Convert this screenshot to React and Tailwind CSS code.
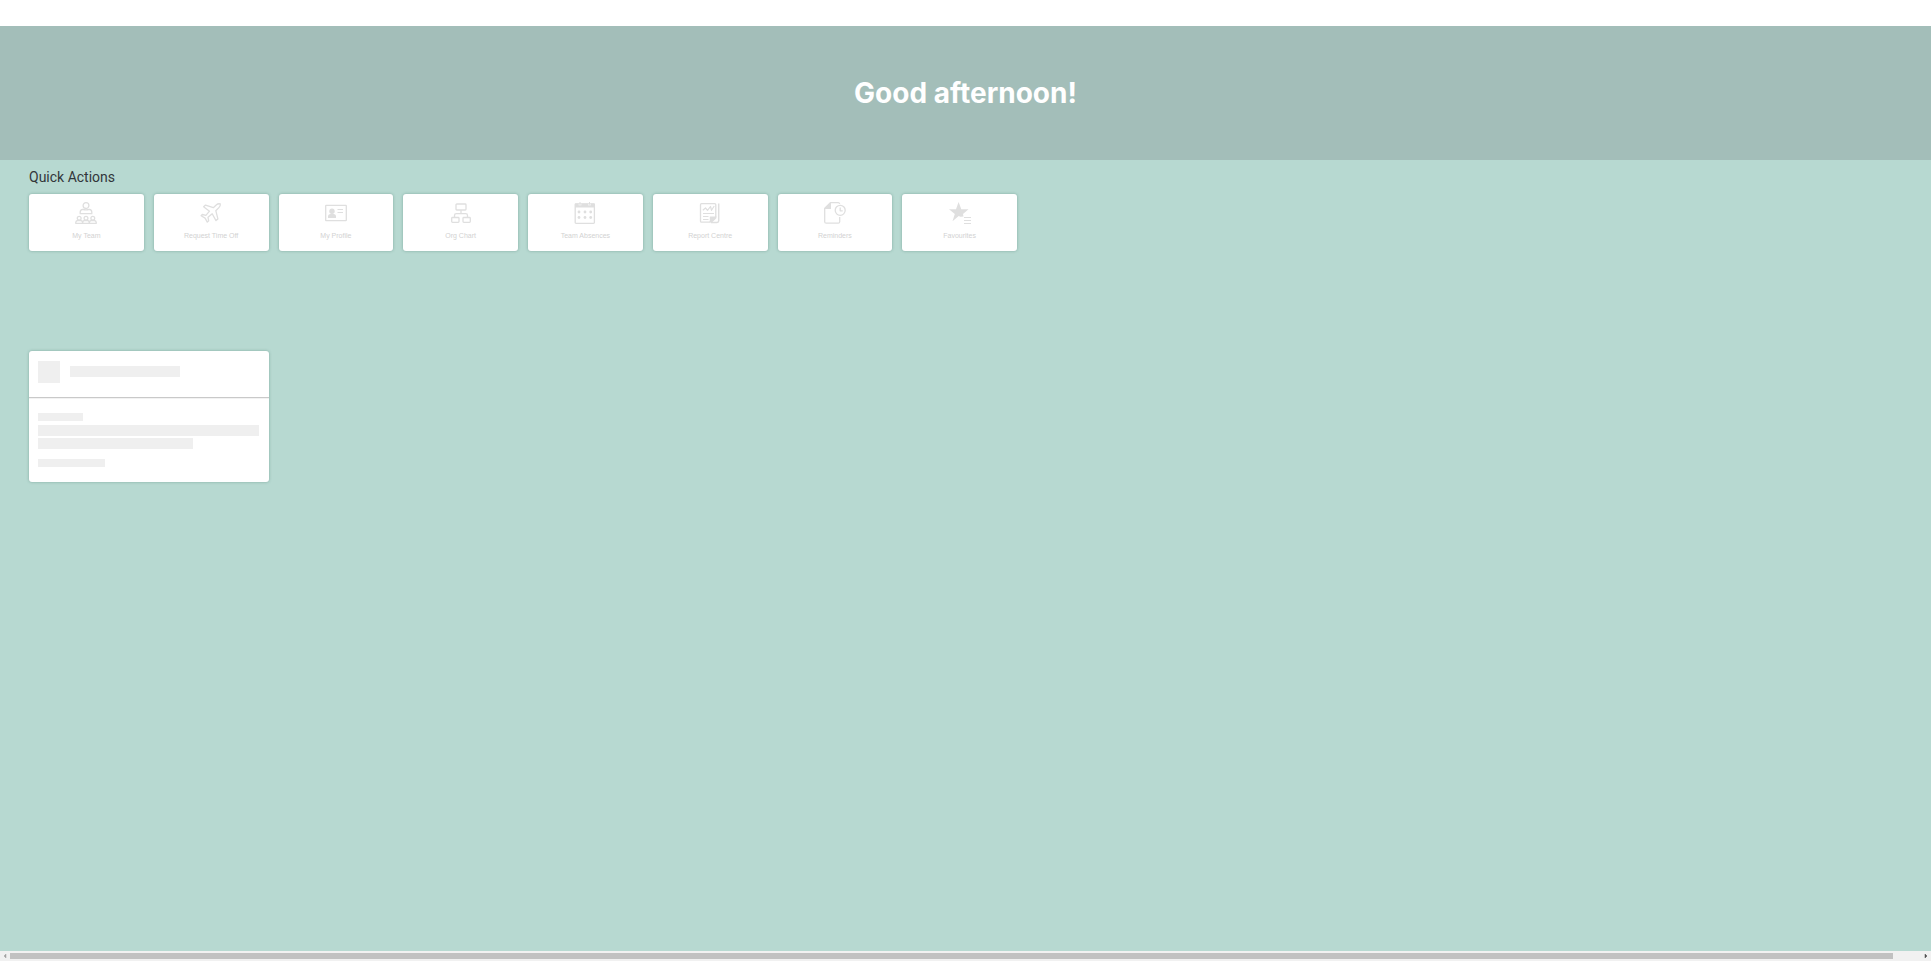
import React from "react";

function Icon({ children }) {
  return (
    <svg
      viewBox="0 0 22 22"
      className="size-[22px]"
      fill="none"
      stroke="currentColor"
      strokeWidth="1.3"
      strokeLinejoin="round"
      aria-hidden="true"
    >
      {children}
    </svg>
  );
}

function Person({ x }) {
  return (
    <>
      <circle cx={x} cy="16.200" r="1.900" />
      <path d={`M${x - 3.5} 21.3v-.6q0-1.800 1.800-2.200h3.400q1.800 .4 1.800 2.200v.6z`} />
    </>
  );
}

const TeamIcon = () => (
  <Icon>
    <circle cx="11" cy="3.600" r="2.900" />
    <path d="M5.200 11.700v-1.700q0-2.400 2.500-2.700 3.300 1 6.600 0 2.500.3 2.500 2.700v1.700z" />
    <Person x={4.2} />
    <Person x={11} />
    <Person x={17.8} />
  </Icon>
);

const PlaneIcon = () => (
  <Icon>
    <path d="M20.300 1.900q-2.300-.5-3.800.9l-3.200 2.900-7.800-2.600-1.900 1.600 5.900 4.500-3.600 4.200-3.600-.9-1.200 1.300 4 2.300 2.200 4 1.400-1.300-.7-3.500 4.200-3.500 3.800 6.800 1.900-1.700-2.100-8.200 3.100-3.100q1.700-1.600 1.400-3.700z" />
  </Icon>
);

const ProfileIcon = () => (
  <Icon>
    <rect x="0.700" y="3.300" width="20.600" height="15.400" rx="0.500" />
    <g fill="currentColor" stroke="none">
      <circle cx="7" cy="9.300" r="2.700" />
      <path d="M3 16v-1.500q0-2.500 2.500-2.500h3q2.500 0 2.500 2.500V16z" />
    </g>
    <path d="M12.500 7.500h5.500M12.500 10.500h5.500" strokeWidth="1" />
  </Icon>
);

const OrgIcon = () => (
  <Icon>
    <rect x="6" y="2" width="10" height="6" rx="0.800" />
    <rect x="1.700" y="15.500" width="7.300" height="4.800" rx="0.800" />
    <rect x="13" y="15.500" width="7.300" height="4.800" rx="0.800" />
    <path d="M11 8v3.700M4.500 15.500v-2q0-1.800 1.800-1.800h9.400q1.800 0 1.800 1.800v2" />
  </Icon>
);

const CalendarIcon = () => (
  <Icon>
    <rect x="1.200" y="1.800" width="19.200" height="19.500" rx="0.800" />
    <g fill="currentColor" stroke="none">
      <path d="M1 1.500h3.500v1.800h3V1.500H14v1.800h3V1.500h3.500v4H1z" />
      <path d="M5.500 0h1v2.500h-1zM15 0h1v2.500h-1z" />
      <circle cx="5" cy="10" r="1.400" />
      <circle cx="11" cy="10" r="1.400" />
      <circle cx="16.700" cy="10" r="1.400" />
      <circle cx="5" cy="15.500" r="1.400" />
      <circle cx="11" cy="15.500" r="1.400" />
      <circle cx="16.700" cy="15.500" r="1.400" />
    </g>
  </Icon>
);

const ReportIcon = () => (
  <Icon>
    <path d="M10.500 20.200H2.500q-1 0-1-1V2.700q0-1 1-1h13.300q1 0 1 1v12z" />
    <path d="M10.800 14.500h6.600v1.800l-4.500 4.300h-2.100z" fill="currentColor" stroke="none" />
    <path d="M19.700 1.500v17.200q0 1.700-1.700 1.700h-6" strokeWidth="1.500" />
    <path d="M3.800 8.300l2.700-2.300 2 2.300 3-3.800 1 3.800 2.700-4.300" strokeWidth="1.200" />
    <path d="M4 11.500h11M4 14.500h5.500M4 17.500h5.500" strokeWidth="1" />
  </Icon>
);

const RemindersIcon = () => (
  <Icon>
    <path d="M15.700 1.800Q15.400.7 14.200.7H6.500L.7 6.500v13.200q0 1.500 1.500 1.500h12q1.500 0 1.500-1.500V15" />
    <path d="M6 .5h1V7H.5V6z" fill="currentColor" stroke="none" />
    <circle cx="16.200" cy="8.300" r="5" />
    <path d="M16.200 5.500v3.300h2.500" />
  </Icon>
);

const FavouritesIcon = () => (
  <Icon>
    <path
      d="M9.600 0l2.700 7.200h7.200l-5.500 4.900.5 2.400q-2.500 0-3 .3l-1.800-.7-6.200 5.100 2.300-7.300L0 7.200h7z"
      fill="currentColor"
      stroke="none"
    />
    <path d="M15 15.500h7M15 18.500h7M15 21.500h7" strokeWidth="1" />
  </Icon>
);

const actions = [
  ["My Team", TeamIcon],
  ["Request Time Off", PlaneIcon],
  ["My Profile", ProfileIcon],
  ["Org Chart", OrgIcon],
  ["Team Absences", CalendarIcon],
  ["Report Centre", ReportIcon],
  ["Reminders", RemindersIcon],
  ["Favourites", FavouritesIcon],
];

function QuickActions() {
  return (
    <section className="px-[29px] pt-[7px]">
      <h2 className="font-['Roboto','Liberation_Sans',sans-serif] text-[14px] leading-5 text-[#32363a]">
        Quick Actions
      </h2>
      <div className="mt-[7px] grid max-w-[988px] grid-cols-8 gap-[10px]">
        {actions.map(([label, Glyph]) => (
          <button
            key={label}
            type="button"
            className="flex h-[57px] flex-col items-center rounded-[3px] bg-white pt-2 text-[#dfdfdf] shadow-[0_0_3px_rgba(60,110,100,0.45)]"
          >
            <Glyph />
            <span className="mt-[7px] font-['Liberation_Sans',Arial,sans-serif] text-[7px] leading-[10px] whitespace-nowrap text-[#d2d2d2]">
              {label}
            </span>
          </button>
        ))}
      </div>
    </section>
  );
}

function PlaceholderCard() {
  return (
    <section className="px-[29px] pt-[100px]">
      <div
        aria-busy="true"
        className="w-60 rounded-[3px] bg-white shadow-[0_0_3px_rgba(60,110,100,0.45)]"
      >
        <div className="flex h-[47px] gap-[10px] border-b border-[#c9c9c9] px-[9px] pt-[10px]">
          <div className="size-[22px] bg-[#efefef]" />
          <div className="mt-[5px] h-[11px] w-[110px] bg-[#efefef]" />
        </div>
        <div className="border-t border-[#f2f2f2] px-[9px] pt-[14px] pb-[15px]">
          <div className="h-2 w-[45px] bg-[#efefef]" />
          <div className="mt-1 h-[11px] w-[221px] bg-[#efefef]" />
          <div className="mt-[2px] h-[11px] w-[155px] bg-[#efefef]" />
          <div className="mt-[10px] h-2 w-[67px] bg-[#efefef]" />
        </div>
      </div>
    </section>
  );
}

function ScrollBar() {
  return (
    <div className="flex h-[10px] items-center justify-between bg-[#f1f1f1]" aria-hidden="true">
      <svg viewBox="0 0 10 10" className="size-[10px]">
        <path d="M6 3v4L4 5z" fill="#a3a3a3" stroke="#a3a3a3" strokeWidth="0.500" />
      </svg>
      <div className="mr-7 h-[6px] flex-1 bg-[#c1c1c1]" />
      <svg viewBox="0 0 10 10" className="size-[10px]">
        <path d="M4 3v4l2-2z" fill="#505050" stroke="#505050" strokeWidth="0.500" />
      </svg>
    </div>
  );
}

export default function App() {
  return (
    <div className="flex min-h-screen flex-col bg-[#b7d9d1] font-['Inter','Liberation_Sans',sans-serif]">
      <div className="h-[26px] bg-white" />
      <header className="flex h-[134px] items-center justify-center bg-[#a3beb9]">
        <h1 className="text-[28px] leading-9 font-bold text-white">Good afternoon!</h1>
      </header>
      <main className="flex-1">
        <QuickActions />
        <PlaceholderCard />
      </main>
      <ScrollBar />
    </div>
  );
}
